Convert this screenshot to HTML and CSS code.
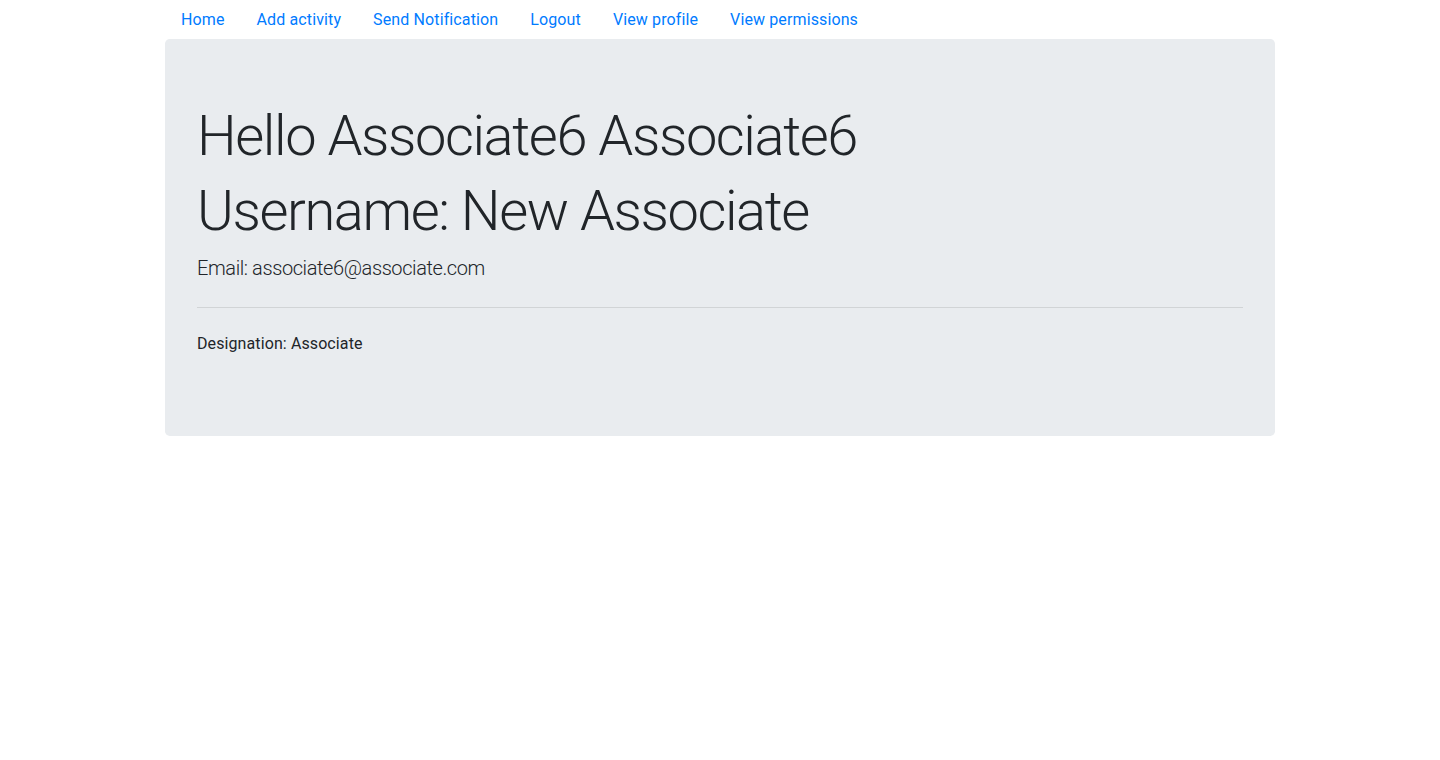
FILE: index.html
```html
<!DOCTYPE html>
<html lang="en">
<head>
<meta charset="utf-8">
<title>Profile</title>
<link rel="stylesheet" href="styles.css">
</head>
<body>
<div class="container">
  <ul class="nav">
    <li><a class="nav-link" href="#">Home</a></li>
    <li><a class="nav-link" href="#">Add activity</a></li>
    <li><a class="nav-link" href="#">Send Notification</a></li>
    <li><a class="nav-link" href="#">Logout</a></li>
    <li><a class="nav-link" href="#">View profile</a></li>
    <li><a class="nav-link" href="#">View permissions</a></li>
  </ul>
  <div class="jumbotron">
    <h1 class="display-4">Hello Associate6 Associate6</h1>
    <h1 class="display-4">Username: New Associate</h1>
    <p class="lead">Email: associate6@associate.com</p>
    <hr class="divider">
    <p class="text">Designation: Associate</p>
  </div>
</div>
</body>
</html>
```
FILE: styles.css
```css
* { box-sizing: border-box; }
html, body { margin: 0; }
body {
  font-family: Roboto, "Noto Sans", "Liberation Sans", sans-serif;
  font-size: 16px;
  line-height: 1.5;
  color: #212529;
  background: #fff;
}
.container {
  max-width: 1140px;
  margin: 0 auto;
  padding: 0 15px;
}
.nav {
  display: flex;
  flex-wrap: wrap;
  list-style: none;
  margin: 0;
  padding: 0;
}
.nav-link {
  display: block;
  padding: 8px 16px;
  color: #007bff;
  text-decoration: none;
  line-height: 23px;
  letter-spacing: 0.12px;
}
.jumbotron {
  background: #e9ecef;
  border-radius: 4.8px;
  padding: 64px 32px;
}
.display-4 {
  font-size: 56px;
  font-weight: 300;
  line-height: 1.2;
  margin: 0 0 8px;
  letter-spacing: -1.4px;
}
.lead {
  font-size: 20px;
  font-weight: 300;
  margin: 0 0 16px;
  letter-spacing: -0.4px;
}
.divider {
  margin: 24px 0;
  border: 0;
  border-top: 1px solid rgba(0,0,0,0.1);
}
.text {
  margin: 0 0 16px;
  font-size: 16px;
  letter-spacing: 0.1px;
}
```
